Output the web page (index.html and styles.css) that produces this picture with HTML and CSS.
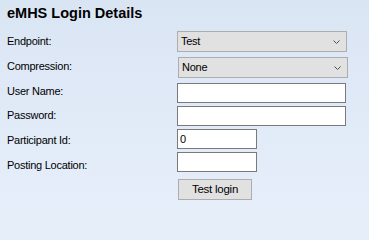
FILE: index.html
```
<!DOCTYPE html>
<html>
<head>
<meta charset="utf-8">
<link rel="stylesheet" href="styles.css">
</head>
<body>
<div class="panel">
  <h1 class="title">eMHS Login Details</h1>
  <div class="form">
    <div class="row row-combo">
      <div class="lbl p35">Endpoint:</div>
      <div class="combo"><span>Test</span><svg class="chev" width="7" height="4" viewBox="0 0 7 4"><polyline points="0.5,0.5 3.5,3.5 6.5,0.5" fill="none" stroke="#505050" stroke-width="1"/></svg></div>
    </div>
    <div class="row row-combo">
      <div class="lbl p3">Compression:</div>
      <div class="combo shift"><span>None</span><svg class="chev" width="7" height="4" viewBox="0 0 7 4"><polyline points="0.5,0.5 3.5,3.5 6.5,0.5" fill="none" stroke="#505050" stroke-width="1"/></svg></div>
    </div>
    <div class="row">
      <div class="lbl p15">User Name:</div>
      <div class="tb wide"></div>
    </div>
    <div class="row">
      <div class="lbl p3">Password:</div>
      <div class="tb wide"></div>
    </div>
    <div class="row">
      <div class="lbl p45">Participant Id:</div>
      <div class="tb short">0</div>
    </div>
    <div class="row">
      <div class="lbl p65">Posting Location:</div>
      <div class="tb short"></div>
    </div>
    <div class="row row-btn">
      <div class="lbl"></div>
      <div class="btn">Test login</div>
    </div>
  </div>
</div>
</body>
</html>
```
FILE: styles.css
```
html {
  margin: 0;
  padding: 0;
  background: #e6eefa;
}
body {
  margin: 0;
  padding: 0;
  width: 369px;
  height: 210px;
  overflow: hidden;
  background: linear-gradient(to bottom, #dae5f4, #e6eefa);
  font-family: "Liberation Sans", Arial, sans-serif;
  color: #000;
}
.panel {
  padding: 5px 0 0 7px;
}
.title {
  margin: 0;
  font-size: 14.5px;
  font-weight: bold;
  line-height: 17px;
}
.form {
  display: flex;
  flex-direction: column;
  row-gap: 3px;
  margin-top: 9px;
}
.row {
  display: grid;
  grid-template-columns: 170px auto;
  height: 20px;
  font-size: 11px;
  letter-spacing: -0.25px;
  line-height: 13px;
}
.row-combo {
  height: 23px;
}
.row-btn {
  margin-top: 4px;
  height: 21px;
}
.lbl { white-space: nowrap; }
.p15 { padding-top: 1.5px; }
.p3 { padding-top: 3px; }
.p35 { padding-top: 3.5px; }
.p45 { padding-top: 4.5px; }
.p65 { padding-top: 6.5px; }
.combo {
  box-sizing: border-box;
  width: 170px;
  height: 21px;
  border: 1px solid #adadad;
  background: #e1e1e1;
  display: flex;
  align-items: center;
  justify-content: space-between;
  padding: 0 6px 0 3px;
}
.combo.shift {
  margin-left: 1px;
}
.chev {
  display: block;
}
.tb {
  box-sizing: border-box;
  height: 20px;
  border: 1px solid #7a7a7a;
  background: #fff;
  padding-left: 2px;
  display: flex;
  align-items: center;
}
.wide { width: 169px; }
.short { width: 80px; }
.btn {
  box-sizing: border-box;
  margin-left: 1px;
  width: 74px;
  height: 21px;
  border: 1px solid #adadad;
  background: #e1e1e1;
  display: flex;
  align-items: center;
  justify-content: center;
  font-size: 11.5px;
}
```
